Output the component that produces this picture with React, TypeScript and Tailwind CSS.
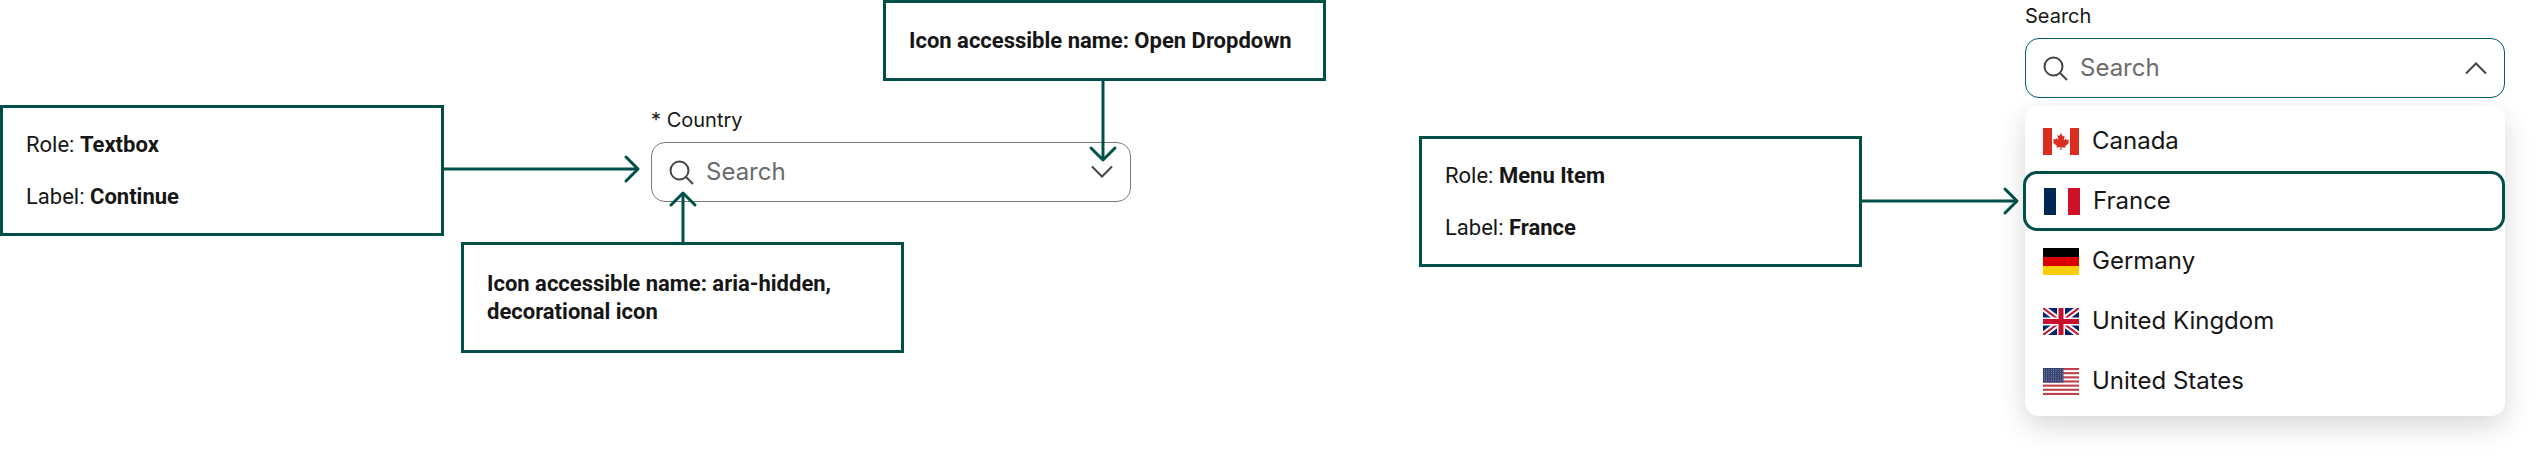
import type { ReactNode } from "react";

const GREEN = "#00504a";

function Note({ className, children }: { className: string; children: ReactNode }) {
  return (
    <div
      className={`absolute flex flex-col justify-center gap-[24px] border-[3px] border-[#00504a] bg-white pl-[23px] font-['Roboto',sans-serif] text-[22px] leading-[28px] text-[#161616] ${className}`}
    >
      {children}
    </div>
  );
}

// one arrow, drawn from the tail at (x1,y1) to the tip at (x2,y2) in page coords
function Arrow({ x1, y1, x2, y2 }: { x1: number; y1: number; x2: number; y2: number }) {
  const dx = Math.sign(x2 - x1);
  const dy = Math.sign(y2 - y1);
  const s = 12;
  const head = dx
    ? `M${x2 - dx * s} ${y2 - s}L${x2} ${y2}L${x2 - dx * s} ${y2 + s}`
    : `M${x2 - s} ${y2 - dy * s}L${x2} ${y2}L${x2 + s} ${y2 - dy * s}`;
  return (
    <svg className="pointer-events-none absolute left-0 top-0 h-[468px] w-[2543px]" fill="none">
      <path d={`M${x1} ${y1}L${x2} ${y2}`} stroke={GREEN} strokeWidth="3" />
      <path d={head} stroke={GREEN} strokeWidth="3" strokeLinecap="round" strokeLinejoin="round" />
    </svg>
  );
}

function SearchIcon() {
  return (
    <svg viewBox="0 0 26 26" className="h-[26px] w-[26px] shrink-0" fill="none" stroke="#444" strokeWidth="2">
      <circle cx="11.5" cy="11.5" r="9" />
      <path d="M18 18l7 7" />
    </svg>
  );
}

function Chevron({ up }: { up?: boolean }) {
  return (
    <svg viewBox="0 0 24 14" className="h-[14px] w-[24px]" fill="none" stroke="#444" strokeWidth="2">
      <path d={up ? "M2 12.5L12 2.5l10 10" : "M2 1.5l10 10 10-10"} />
    </svg>
  );
}

function SearchField({ className, chevronUp }: { className: string; chevronUp?: boolean }) {
  return (
    <div className={`flex h-[60px] w-[480px] items-center rounded-[14px] bg-white pl-[16px] pr-[16px] ${className}`}>
      <SearchIcon />
      <span className="ml-[12px] flex-1 text-[24px] font-normal text-[#6b6b6b]">Search</span>
      <Chevron up={chevronUp} />
    </div>
  );
}

function FlagCA() {
  return (
    <svg viewBox="0 0 36 27" className="h-[27px] w-[36px]">
      <rect width="36" height="27" fill="#fff" />
      <rect width="9" height="27" fill="#d92d20" />
      <rect x="27" width="9" height="27" fill="#d92d20" />
      <path
        d="M18 5l1.8 3.4 1.9-1-.9 5 2-2 .6 1.6 2.6-.4-.8 2.7 1 .5-4 3.4.4 1.6-4-.5V22h-1.2v-3.1l-4 .5.4-1.6-4-3.4 1-.5-.8-2.7 2.6.4.6-1.6 2 2-.9-5 1.9 1z"
        fill="#d92d20"
      />
    </svg>
  );
}

function FlagFR() {
  return (
    <svg viewBox="0 0 36 27" className="h-[27px] w-[36px]">
      <rect width="12" height="27" fill="#002654" />
      <rect x="12" width="12" height="27" fill="#fff" />
      <rect x="24" width="12" height="27" fill="#ce1126" />
    </svg>
  );
}

function FlagDE() {
  return (
    <svg viewBox="0 0 36 27" className="h-[27px] w-[36px]">
      <rect width="36" height="9" fill="#000" />
      <rect y="9" width="36" height="9" fill="#dd0000" />
      <rect y="18" width="36" height="9" fill="#ffce00" />
    </svg>
  );
}

function FlagUK() {
  return (
    <svg viewBox="0 0 36 27" className="h-[27px] w-[36px]">
      <rect width="36" height="27" fill="#012169" />
      <path d="M0 0l36 27M36 0L0 27" stroke="#fff" strokeWidth="6" />
      <path d="M0 0l36 27M36 0L0 27" stroke="#c8102e" strokeWidth="2" />
      <path d="M18 0v27M0 13.5h36" stroke="#fff" strokeWidth="8" />
      <path d="M18 0v27M0 13.5h36" stroke="#c8102e" strokeWidth="5" />
    </svg>
  );
}

function FlagUS() {
  const stripes = [0, 1, 2, 3, 4, 5, 6];
  const stars: { x: number; y: number }[] = [];
  for (let r = 0; r < 7; r++) {
    for (let c = 0; c < 9; c++) stars.push({ x: 1.4 + c * 2.3, y: 1.4 + r * 1.9 });
  }
  return (
    <svg viewBox="0 0 36 27" className="h-[27px] w-[36px]">
      <rect width="36" height="27" fill="#fff" />
      {stripes.map((i) => (
        <rect key={i} y={i * 4.15} width="36" height="2.08" fill="#bf3f4a" />
      ))}
      <rect width="20.5" height="14.5" fill="#34406f" />
      {stars.map((s) => (
        <circle key={`${s.x}-${s.y}`} cx={s.x} cy={s.y} r="0.45" fill="#cfd3e2" />
      ))}
    </svg>
  );
}

const COUNTRIES = [
  { name: "Canada", flag: <FlagCA /> },
  { name: "France", flag: <FlagFR /> },
  { name: "Germany", flag: <FlagDE /> },
  { name: "United Kingdom", flag: <FlagUK /> },
  { name: "United States", flag: <FlagUS /> },
];

export default function App() {
  return (
    <div className="relative h-[468px] w-[2543px] overflow-hidden bg-white font-['Inter','Liberation_Sans',sans-serif] text-[#161616]">
      {/* left diagram */}
      <Note className="left-0 top-[105px] h-[131px] w-[444px]">
        <p>
          Role: <b>Textbox</b>
        </p>
        <p>
          Label: <b>Continue</b>
        </p>
      </Note>
      <Arrow x1={443} y1={169} x2={638} y2={169} />

      <div className="absolute left-[651px] top-[107px]">
        <div className="mb-[8px] text-[20px] leading-[27px]">* Country</div>
        <SearchField className="w-[479px] border border-[#7a7a7a]" />
      </div>

      <Note className="left-[883px] top-0 h-[81px] w-[443px]">
        <p>
          <b>Icon accessible name: Open Dropdown</b>
        </p>
      </Note>
      <Arrow x1={1103} y1={79} x2={1103} y2={160} />

      <Note className="left-[461px] top-[242px] h-[111px] w-[443px]">
        <p>
          <b>
            Icon accessible name: aria-hidden,
            <br />
            decorational icon
          </b>
        </p>
      </Note>
      <Arrow x1={683} y1={243} x2={683} y2={193} />

      {/* right diagram */}
      <Note className="left-[1419px] top-[136px] h-[131px] w-[443px]">
        <p>
          Role: <b>Menu Item</b>
        </p>
        <p>
          Label: <b>France</b>
        </p>
      </Note>
      <Arrow x1={1862} y1={201} x2={2017} y2={201} />

      <div className="absolute left-[2025px] top-[3px] w-[480px]">
        <div className="mb-[8px] text-[20px] leading-[27px]">Search</div>
        <SearchField className="border border-[#005f75]" chevronUp />
        <ul className="mt-[8px] rounded-[14px] bg-white py-[5px] shadow-[0_10px_28px_rgba(0,0,0,0.16)]">
          {COUNTRIES.map((c) => (
            <li
              key={c.name}
              className={`flex h-[60px] items-center gap-[13px] rounded-[14px] pl-[18px] text-[24px] ${
                c.name === "France" ? "-ml-[2px] border-[3px] border-[#00504a] pl-[17px]" : ""
              }`}
            >
              {c.flag}
              {c.name}
            </li>
          ))}
        </ul>
      </div>
    </div>
  );
}
